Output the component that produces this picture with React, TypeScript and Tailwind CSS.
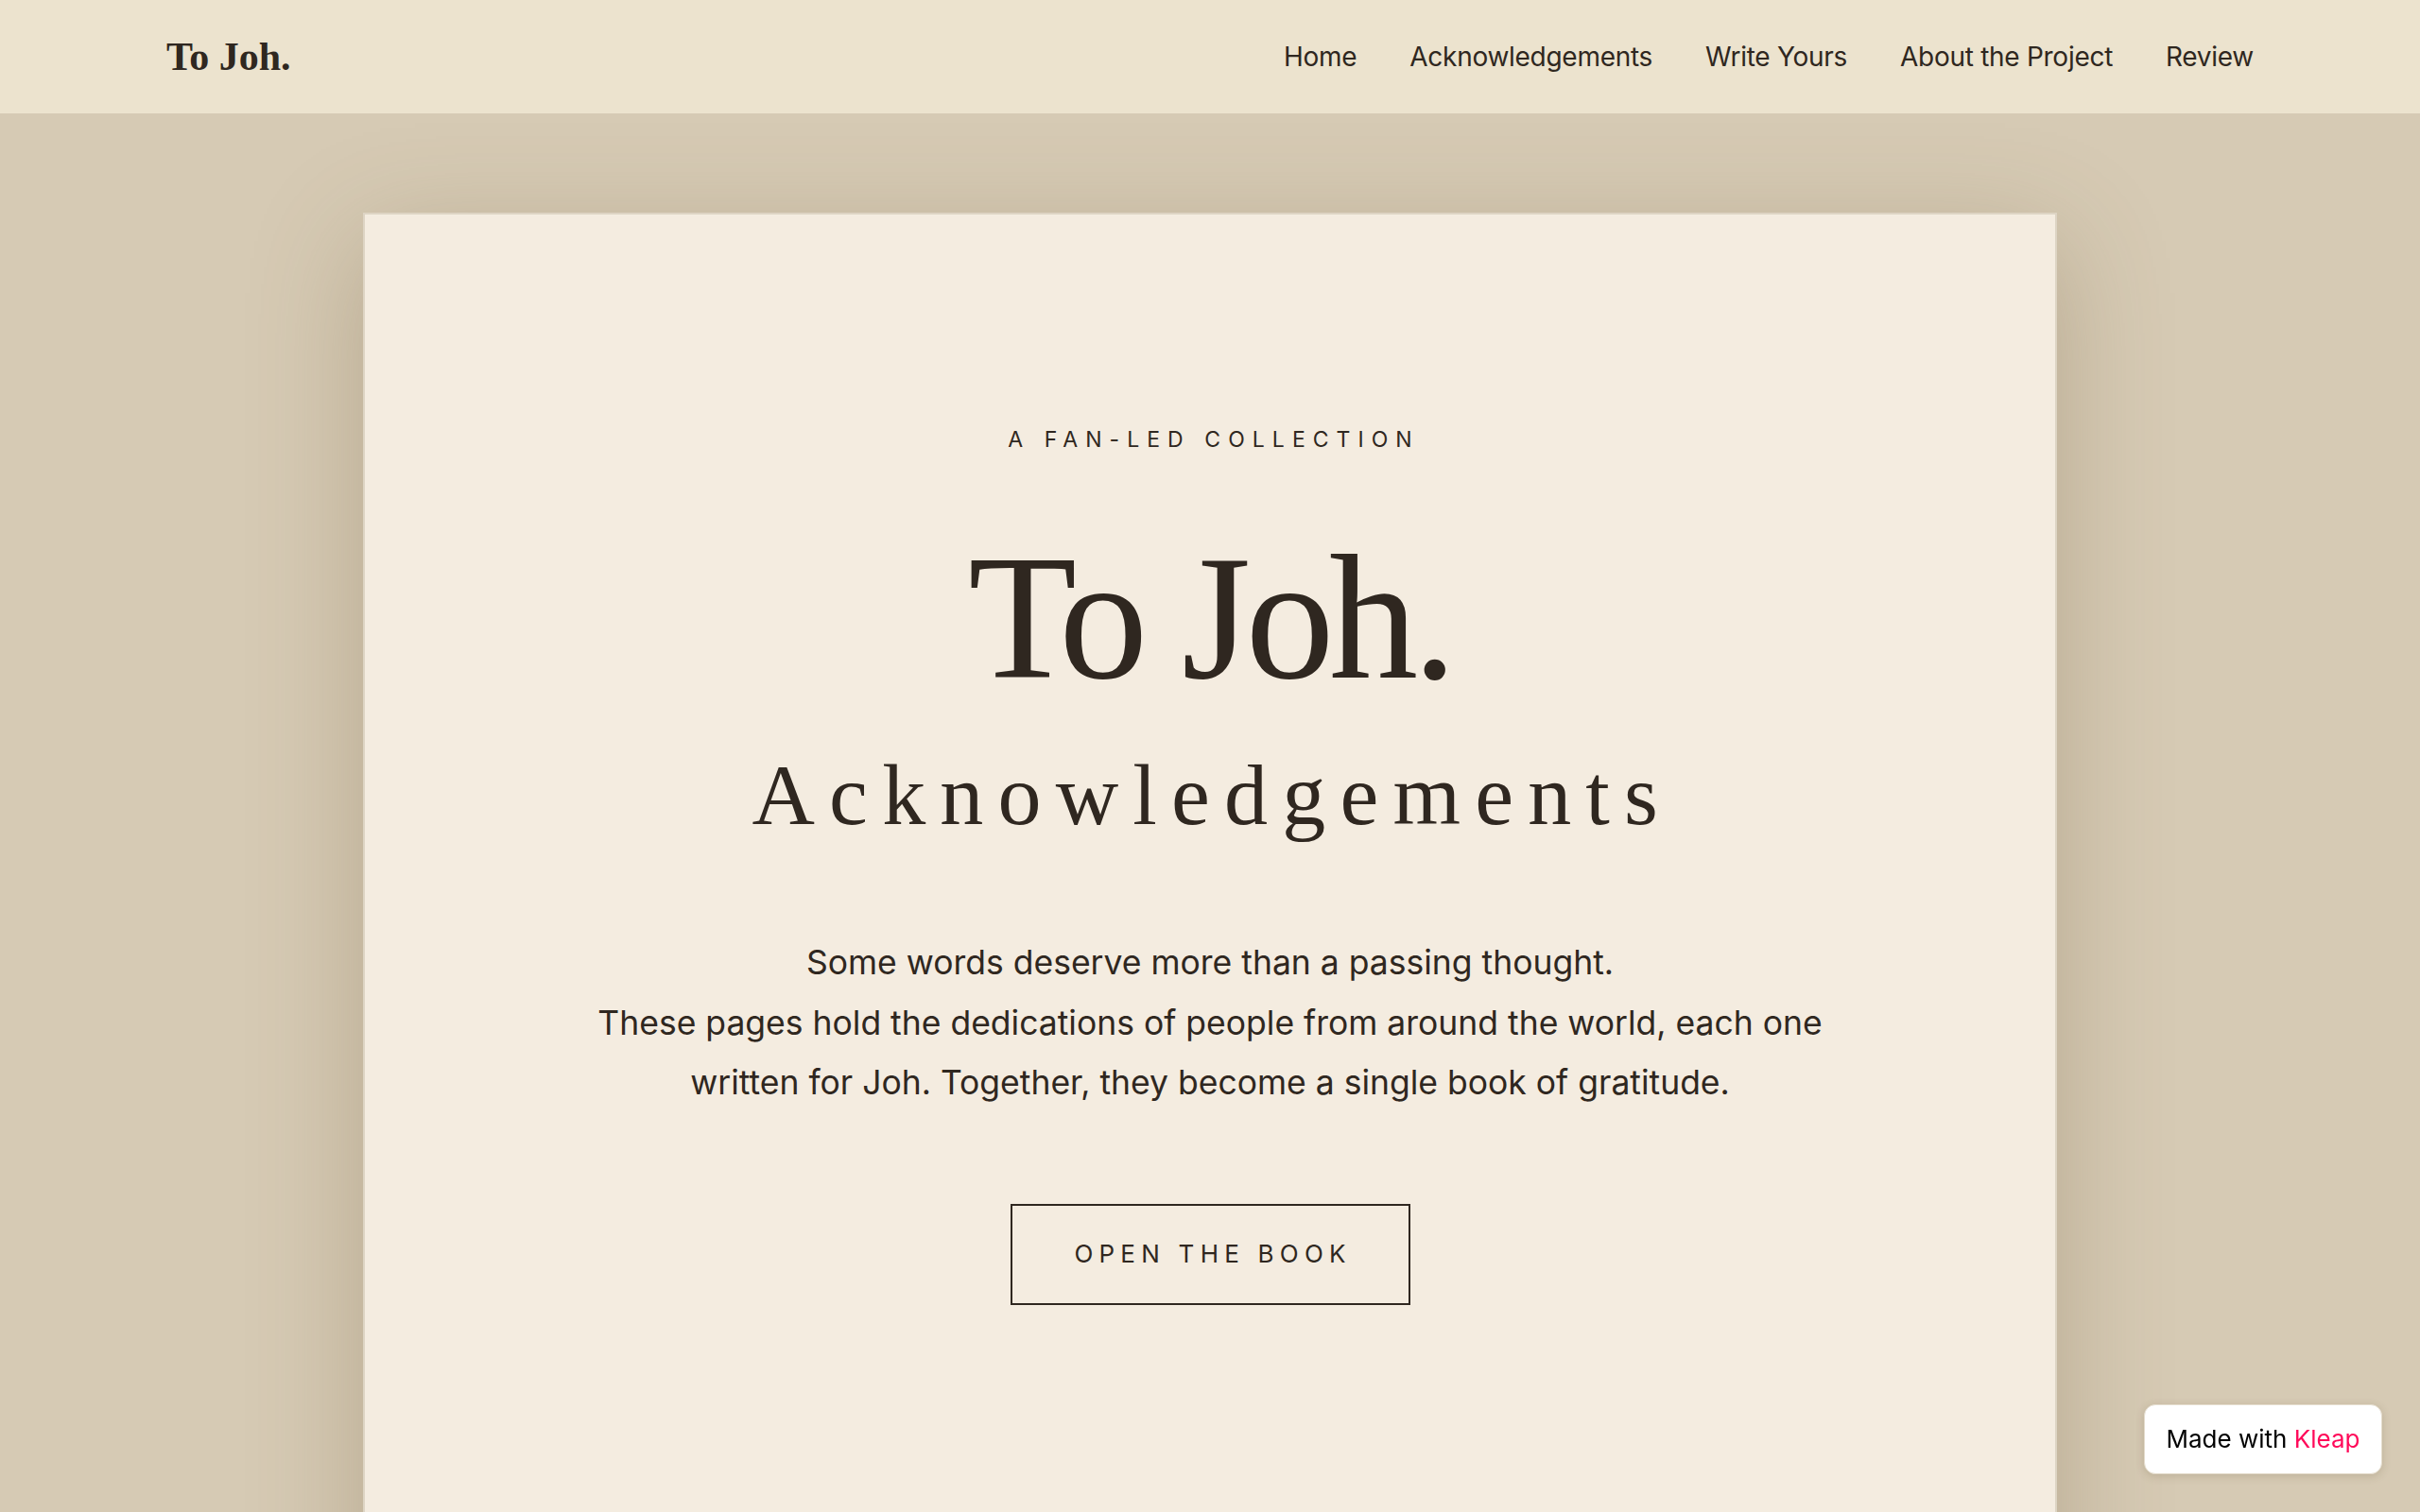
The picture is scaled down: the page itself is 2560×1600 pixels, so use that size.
import React from 'react';

const navItems = ['Home', 'Acknowledgements', 'Write Yours', 'About the Project', 'Review'];

const Header: React.FC = () => (
  <header className="h-[120px] bg-[#ece3ce] flex items-center justify-between px-[176px]">
    <a className="font-['Liberation_Serif','Times_New_Roman',serif] font-bold text-[42px] leading-none text-[#2f2720]">
      To Joh.
    </a>
    <nav className="flex items-center gap-14">
      {navItems.map((item) => (
        <a
          key={item}
          className="font-['Inter',sans-serif] text-[28px] leading-none text-[#2f2720] tracking-[-0.01em]"
        >
          {item}
        </a>
      ))}
    </nav>
  </header>
);

const Hero: React.FC = () => (
  <section className="w-[1792px] mx-auto mt-[105px] min-h-[1500px] bg-[#f4ece0] border-2 border-[#ddd4c4] shadow-[0_30px_110px_rgba(110,90,55,0.30)] flex flex-col items-center pt-[227px] text-[#2f2720]">
    {/* Eyebrow */}
    <p className="font-['Inter',sans-serif] text-[23px] leading-none tracking-[0.35em] pl-[0.35em] uppercase">
      A Fan-led Collection
    </p>

    {/* Title */}
    <h1 className="mt-[83px] font-['Liberation_Serif','Times_New_Roman',serif] text-[188px] leading-none tracking-[-0.03em]">
      To Joh.
    </h1>
    <h2 className="mt-[47px] font-['Liberation_Serif','Times_New_Roman',serif] text-[92px] leading-none tracking-[0.165em] pl-[0.05em]">
      Acknowledgements
    </h2>

    {/* Intro */}
    <p className="mt-[100px] font-['Inter',sans-serif] text-[35.5px] leading-[63.5px] text-center">
      Some words deserve more than a passing thought.
      <br />
      These pages hold the dedications of people from around the world, each one
      <br />
      written for Joh. Together, they become a single book of gratitude.
    </p>

    {/* CTA */}
    <button className="mt-[96px] w-[423px] h-[107px] border-2 border-[#2f2720] flex items-center justify-center font-['Inter',sans-serif] text-[26px] leading-none tracking-[0.24em] pl-[0.24em] uppercase text-[#2f2720]">
      Open the Book
    </button>
  </section>
);

const Badge: React.FC = () => (
  <div className="fixed right-[40px] bottom-[40px] w-[252px] h-[74px] bg-white rounded-[12px] shadow-[0_2px_10px_rgba(80,60,30,0.18)] border border-[#e4dccd] flex items-center justify-center font-['Inter',sans-serif] text-[26px] leading-none">
    <span className="text-black">Made with&nbsp;</span>
    <span className="text-[#ff0a5a]">Kleap</span>
  </div>
);

export default function App() {
  return (
    <div className="h-[1600px] overflow-hidden bg-[#d6cab4]">
      <Header />
      <Hero />
      <Badge />
    </div>
  );
}
